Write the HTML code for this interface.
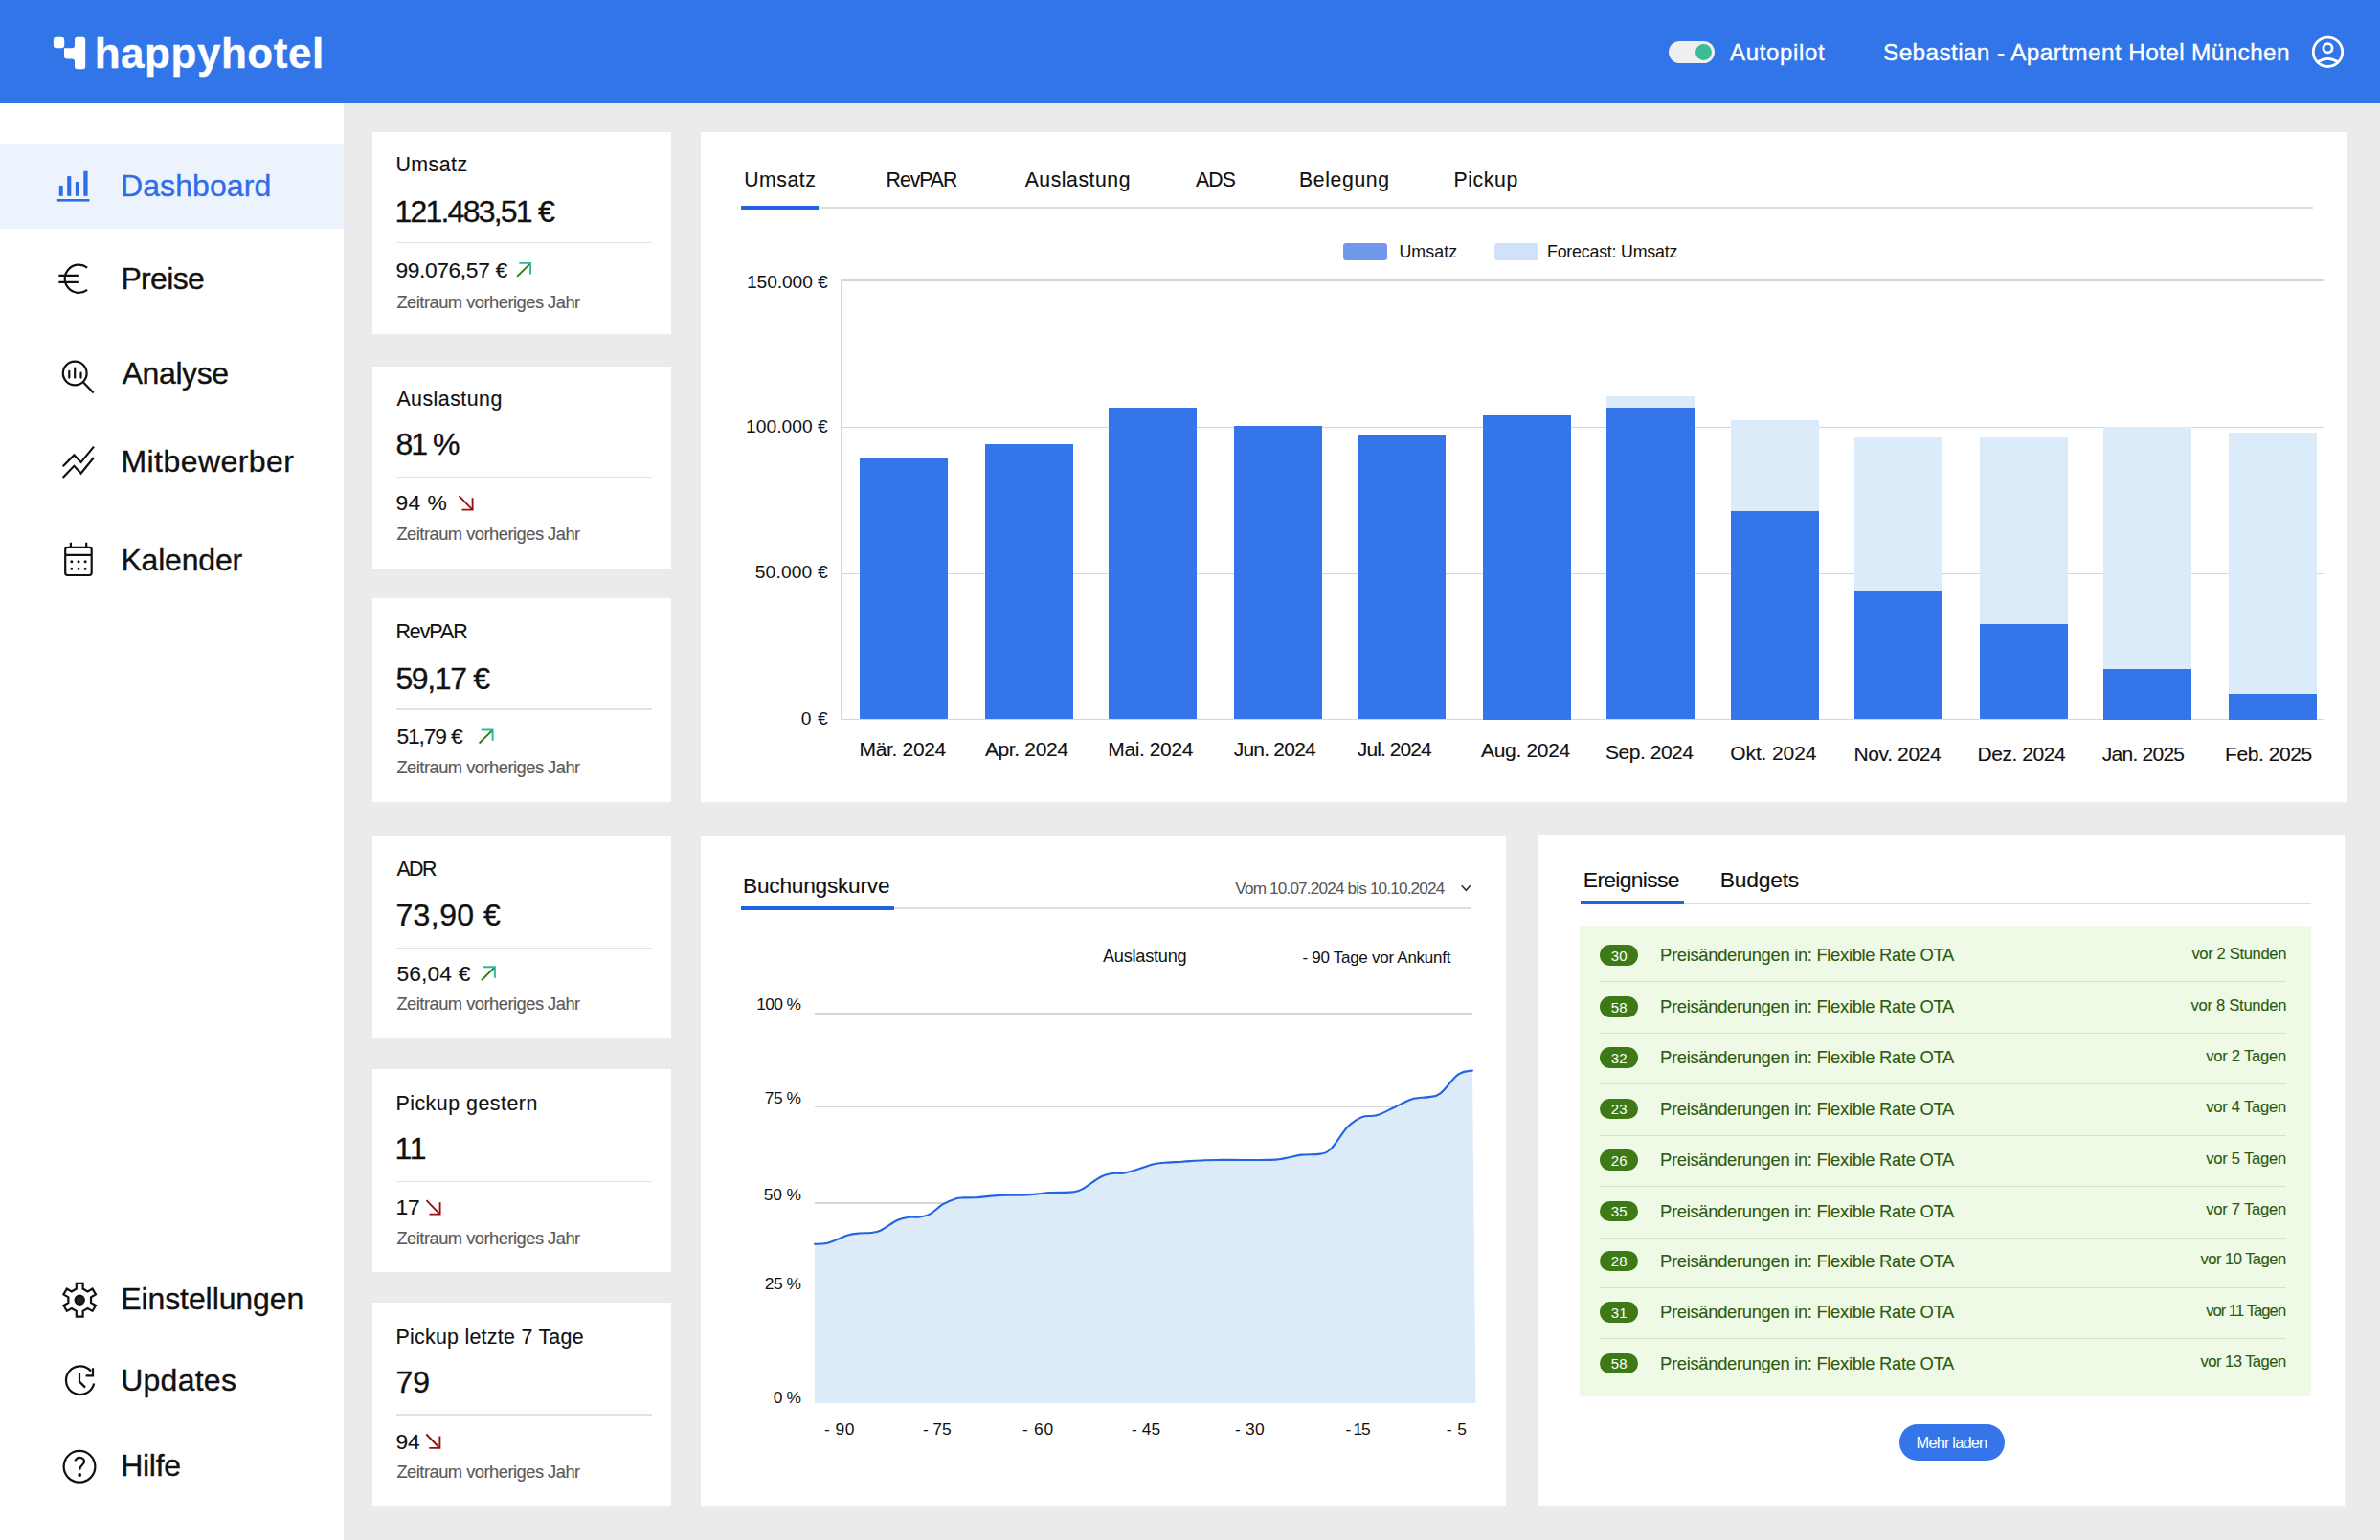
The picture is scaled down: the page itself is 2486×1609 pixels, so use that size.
<!DOCTYPE html>
<html><head><meta charset="utf-8"><title>happyhotel Dashboard</title>
<style>
html,body{margin:0;padding:0;}
body{width:2486px;height:1609px;position:relative;overflow:hidden;background:#ebebeb;font-family:'Liberation Sans', sans-serif;}
.t{position:absolute;white-space:pre;line-height:1;}
</style></head><body>
<div style="position:absolute;left:0.00px;top:0.00px;width:2486.00px;height:108.00px;background:#3275e9;"></div>
<svg style="position:absolute;left:0;top:0" width="120" height="107" viewBox="0 0 120 107">
<g fill="#fff">
<rect x="55.9" y="38.7" width="11.3" height="11.5" rx="3"/>
<path d="M81 38.7 H86.2 Q89.2 38.7 89.2 41.7 V69.2 Q89.2 72.2 86.2 72.2 H81 Q78 72.2 78 69.2 V64.2 Q78 61.5 75.3 61.5 H70 Q67 61.5 67 58.5 V50.2 H75.3 Q78 50.2 78 47.5 V41.7 Q78 38.7 81 38.7 Z"/>
</g></svg>
<div style="position:absolute;left:1742.60px;top:43.00px;width:48.50px;height:22.70px;background:#efefef;border-radius:12px;"></div>
<div style="position:absolute;left:1770.80px;top:45.60px;width:17.00px;height:17.00px;background:#3dbb93;border-radius:50%;"></div>
<svg style="position:absolute;left:2410px;top:33px" width="44" height="44" viewBox="2410 33 44 44">
<g fill="none" stroke="#fff" stroke-width="2.8">
<circle cx="2431.5" cy="54.3" r="15.2"/>
<circle cx="2431.5" cy="50.3" r="4.6"/>
<path d="M2420.5 65.2 Q2431.5 57.5 2442.5 65.2"/>
</g></svg>
<div style="position:absolute;left:0.00px;top:108.00px;width:359.00px;height:1501.00px;background:#fff;"></div>
<div style="position:absolute;left:0.00px;top:150.00px;width:359.00px;height:89.00px;background:#edf3fd;"></div>
<svg style="position:absolute;left:0;top:0" width="120" height="1609" viewBox="0 0 120 1609">
<g fill="#2f6de6">
<rect x="61.8" y="193.9" width="3.9" height="10.9"/>
<rect x="70.2" y="184.1" width="4.1" height="20.7"/>
<rect x="78.9" y="190" width="4.1" height="14.8"/>
<rect x="87.3" y="178.75" width="4.3" height="26.05"/>
<rect x="59.8" y="208.0" width="33.6" height="2.6"/>
</g>
<g fill="none" stroke="#111" stroke-width="2.2">
<path d="M91.1 279.6 A14.6 14.6 0 1 0 91.1 302.9"/>
<path d="M61.4 287.9 H81.8 M61.4 294.9 H81.8"/>
<circle cx="78.2" cy="390" r="12.4"/>
<path d="M87.1 399.4 L97.7 410.6"/>
<path d="M72.3 387.9 V394.6 M78.2 384.5 V394.6 M84.5 389.6 V394.6" stroke-linecap="round"/>
<path d="M65.7 487.3 L77.4 475.4 L84.6 482.9 L98 466.6"/>
<path d="M65.7 498.9 L77.4 486.8 L84.6 494.5 L98 478"/>
<rect x="68.2" y="571.8" width="27.5" height="29.2" rx="2.5"/>
<path d="M68.2 579.8 H95.7 M73.9 566.8 V571.4 M90.2 566.8 V571.4"/>
<path d="M79.80 1346.50 L79.80 1340.80 L86.60 1340.80 L86.60 1346.50 L91.63 1349.41 L96.57 1346.56 L99.97 1352.44 L95.03 1355.29 L95.03 1361.11 L99.97 1363.96 L96.57 1369.84 L91.63 1366.99 L86.60 1369.90 L86.60 1375.60 L79.80 1375.60 L79.80 1369.90 L74.77 1366.99 L69.83 1369.84 L66.43 1363.96 L71.37 1361.11 L71.37 1355.29 L66.43 1352.44 L69.83 1346.56 L74.77 1349.41 Z"/>
<circle cx="83.2" cy="1358.2" r="4.6" fill="#222"/>
<path d="M95 1432.5 A14.8 14.8 0 1 0 98.2 1445.5"/>
<path d="M97 1429.3 V1437.3 H89.6"/>
<path d="M83 1434.5 V1443.6 L89.1 1449.6"/>
<circle cx="83" cy="1532.3" r="16.4"/>
<path d="M78.4 1526.4 C79.5 1523.8 81.3 1522.8 83.3 1522.8 C86 1522.8 88 1524.6 88 1527.3 C88 1530.2 83.3 1531.2 83.1 1535.6"/>
</g>
<g fill="#111">
<circle cx="74.8" cy="586.8" r="1.5"/><circle cx="82" cy="586.8" r="1.5"/><circle cx="89.1" cy="586.8" r="1.5"/>
<circle cx="74.8" cy="594.3" r="1.5"/><circle cx="82" cy="594.3" r="1.5"/><circle cx="89.1" cy="594.3" r="1.5"/>
<circle cx="83.2" cy="1541" r="1.9"/>
</g>
</svg>
<div style="position:absolute;left:389.00px;top:138.00px;width:312.00px;height:211.20px;background:#fff;"></div>
<div style="position:absolute;left:414.00px;top:252.65px;width:267.40px;height:1.50px;background:#e3e3e3;"></div>
<div style="position:absolute;left:389.00px;top:382.50px;width:312.00px;height:211.10px;background:#fff;"></div>
<div style="position:absolute;left:414.00px;top:497.95px;width:267.40px;height:1.50px;background:#e3e3e3;"></div>
<div style="position:absolute;left:389.00px;top:625.00px;width:312.00px;height:212.60px;background:#fff;"></div>
<div style="position:absolute;left:414.00px;top:740.45px;width:267.40px;height:1.50px;background:#e3e3e3;"></div>
<div style="position:absolute;left:389.00px;top:872.60px;width:312.00px;height:212.30px;background:#fff;"></div>
<div style="position:absolute;left:414.00px;top:989.65px;width:267.40px;height:1.50px;background:#e3e3e3;"></div>
<div style="position:absolute;left:389.00px;top:1116.80px;width:312.00px;height:212.20px;background:#fff;"></div>
<div style="position:absolute;left:414.00px;top:1233.75px;width:267.40px;height:1.50px;background:#e3e3e3;"></div>
<div style="position:absolute;left:389.00px;top:1360.80px;width:312.00px;height:212.50px;background:#fff;"></div>
<div style="position:absolute;left:414.00px;top:1477.45px;width:267.40px;height:1.50px;background:#e3e3e3;"></div>
<svg style="position:absolute;left:0;top:0" width="720" height="1609" viewBox="0 0 720 1609"><g fill="none" stroke-width="1.9"><path d="M540.1 288.90000000000003 L553.6 275.6" stroke="#2f7a12"/><path d="M542.3000000000001 274.90000000000003 H554.1 V286.40000000000003" stroke="#2bb99a"/><path d="M479.5 518.1999999999999 L493.0 532.1999999999999" stroke="#9a0f0f"/><path d="M493.6 520.3 V532.6 H482.5" stroke="#9a0f0f"/><path d="M500.6 776.5 L514.1 763.2" stroke="#2f7a12"/><path d="M502.8 762.5 H514.6 V774.0" stroke="#2bb99a"/><path d="M502.9 1024.2 L516.4 1010.9000000000001" stroke="#2f7a12"/><path d="M505.09999999999997 1010.2 H516.9 V1021.7" stroke="#2bb99a"/><path d="M445.5 1254.1999999999998 L459.0 1268.1999999999998" stroke="#9a0f0f"/><path d="M459.6 1256.3 V1268.6 H448.5" stroke="#9a0f0f"/><path d="M445.3 1498.5 L458.8 1512.5" stroke="#9a0f0f"/><path d="M459.40000000000003 1500.6000000000001 V1512.9 H448.3" stroke="#9a0f0f"/></g></svg>
<div style="position:absolute;left:731.90px;top:137.60px;width:1720.30px;height:700.20px;background:#fff;"></div>
<div style="position:absolute;left:773.60px;top:216.30px;width:1642.40px;height:1.60px;background:#dedede;"></div>
<div style="position:absolute;left:773.60px;top:214.50px;width:81.40px;height:4.60px;background:#1f63e4;"></div>
<div style="position:absolute;left:1403.20px;top:253.80px;width:45.70px;height:17.80px;background:#7198ea;border-radius:3px;"></div>
<div style="position:absolute;left:1560.70px;top:253.80px;width:46.20px;height:17.80px;background:#d0e1fb;border-radius:3px;"></div>
<div style="position:absolute;left:879.00px;top:292.40px;width:1548.30px;height:1.40px;background:#d6d6d6;"></div>
<div style="position:absolute;left:879.00px;top:445.90px;width:1548.30px;height:1.40px;background:#d6d6d6;"></div>
<div style="position:absolute;left:879.00px;top:598.80px;width:1548.30px;height:1.40px;background:#d6d6d6;"></div>
<div style="position:absolute;left:879.00px;top:750.80px;width:1548.30px;height:1.40px;background:#d6d6d6;"></div>
<div style="position:absolute;left:878.10px;top:292.40px;width:1.40px;height:459.80px;background:#d6d6d6;"></div>
<div style="position:absolute;left:898.00px;top:478.40px;width:92.00px;height:273.10px;background:#3575ea;"></div>
<div style="position:absolute;left:1028.90px;top:463.70px;width:92.00px;height:287.80px;background:#3575ea;"></div>
<div style="position:absolute;left:1157.70px;top:425.90px;width:92.00px;height:325.60px;background:#3575ea;"></div>
<div style="position:absolute;left:1288.80px;top:445.40px;width:92.00px;height:306.10px;background:#3575ea;"></div>
<div style="position:absolute;left:1417.90px;top:455.20px;width:92.00px;height:296.30px;background:#3575ea;"></div>
<div style="position:absolute;left:1548.70px;top:434.00px;width:92.00px;height:317.50px;background:#3575ea;"></div>
<div style="position:absolute;left:1677.70px;top:413.60px;width:92.00px;height:337.90px;background:#dcebf9;"></div>
<div style="position:absolute;left:1677.70px;top:425.90px;width:92.00px;height:325.60px;background:#3575ea;"></div>
<div style="position:absolute;left:1808.00px;top:438.50px;width:92.00px;height:313.00px;background:#dcebf9;"></div>
<div style="position:absolute;left:1808.00px;top:534.00px;width:92.00px;height:217.50px;background:#3575ea;"></div>
<div style="position:absolute;left:1937.20px;top:456.70px;width:92.00px;height:294.80px;background:#dcebf9;"></div>
<div style="position:absolute;left:1937.20px;top:616.90px;width:92.00px;height:134.60px;background:#3575ea;"></div>
<div style="position:absolute;left:2068.00px;top:456.70px;width:92.00px;height:294.80px;background:#dcebf9;"></div>
<div style="position:absolute;left:2068.00px;top:651.80px;width:92.00px;height:99.70px;background:#3575ea;"></div>
<div style="position:absolute;left:2197.20px;top:446.20px;width:92.00px;height:305.30px;background:#dcebf9;"></div>
<div style="position:absolute;left:2197.20px;top:699.00px;width:92.00px;height:52.50px;background:#3575ea;"></div>
<div style="position:absolute;left:2327.90px;top:451.50px;width:92.00px;height:300.00px;background:#dcebf9;"></div>
<div style="position:absolute;left:2327.90px;top:724.50px;width:92.00px;height:27.00px;background:#3575ea;"></div>
<div style="position:absolute;left:731.90px;top:872.60px;width:841.10px;height:700.70px;background:#fff;"></div>
<div style="position:absolute;left:773.50px;top:948.20px;width:763.50px;height:1.60px;background:#dedede;"></div>
<div style="position:absolute;left:773.50px;top:947.30px;width:160.50px;height:4.00px;background:#1f63e4;"></div>
<svg style="position:absolute;left:1520px;top:918px" width="24" height="20" viewBox="1520 918 24 20"><path d="M1526.8 925.3 L1531.3 930.2 L1535.8 925.3" fill="none" stroke="#333" stroke-width="1.7"/></svg>
<div style="position:absolute;left:851.20px;top:1058.00px;width:686.70px;height:1.60px;background:#d6d6d6;"></div>
<div style="position:absolute;left:851.20px;top:1155.50px;width:686.70px;height:1.60px;background:#d6d6d6;"></div>
<div style="position:absolute;left:851.20px;top:1256.40px;width:686.70px;height:1.60px;background:#d6d6d6;"></div>
<svg style="position:absolute;left:0;top:0" width="2486" height="1609" viewBox="0 0 2486 1609"><path d="M851.00 1299.80 C853.00 1299.67 859.50 1299.63 863.00 1299.00 C866.50 1298.37 868.25 1297.42 872.00 1296.00 C875.75 1294.58 881.25 1291.75 885.50 1290.50 C889.75 1289.25 893.50 1288.92 897.50 1288.50 C901.50 1288.08 905.75 1288.50 909.50 1288.00 C913.25 1287.50 915.42 1287.67 920.00 1285.50 C924.58 1283.33 932.17 1277.28 937.00 1275.00 C941.83 1272.72 945.00 1272.40 949.00 1271.80 C953.00 1271.20 957.25 1271.97 961.00 1271.40 C964.75 1270.83 967.50 1270.60 971.50 1268.40 C975.50 1266.20 980.42 1260.90 985.00 1258.20 C989.58 1255.50 995.42 1253.33 999.00 1252.20 C1002.58 1251.07 1002.75 1251.58 1006.50 1251.40 C1010.25 1251.22 1015.25 1251.52 1021.50 1251.10 C1027.75 1250.68 1036.42 1249.30 1044.00 1248.90 C1051.58 1248.50 1060.67 1248.92 1067.00 1248.70 C1073.33 1248.48 1077.00 1248.03 1082.00 1247.60 C1087.00 1247.17 1090.67 1246.47 1097.00 1246.10 C1103.33 1245.73 1114.42 1246.02 1120.00 1245.40 C1125.58 1244.78 1125.50 1245.05 1130.50 1242.40 C1135.50 1239.75 1144.75 1232.23 1150.00 1229.50 C1155.25 1226.77 1158.17 1226.63 1162.00 1226.00 C1165.83 1225.37 1169.17 1226.25 1173.00 1225.70 C1176.83 1225.15 1179.67 1224.28 1185.00 1222.70 C1190.33 1221.12 1199.67 1217.53 1205.00 1216.20 C1210.33 1214.87 1212.00 1215.12 1217.00 1214.70 C1222.00 1214.28 1228.17 1214.12 1235.00 1213.70 C1241.83 1213.28 1250.33 1212.50 1258.00 1212.20 C1265.67 1211.90 1269.67 1211.95 1281.00 1211.90 C1292.33 1211.85 1316.00 1212.15 1326.00 1211.90 C1336.00 1211.65 1335.42 1211.28 1341.00 1210.40 C1346.58 1209.52 1353.17 1207.40 1359.50 1206.60 C1365.83 1205.80 1373.92 1206.60 1379.00 1205.60 C1384.08 1204.60 1385.17 1205.35 1390.00 1200.60 C1394.83 1195.85 1402.50 1182.72 1408.00 1177.10 C1413.50 1171.48 1418.00 1168.87 1423.00 1166.90 C1428.00 1164.93 1432.50 1166.92 1438.00 1165.30 C1443.50 1163.68 1449.92 1160.02 1456.00 1157.20 C1462.08 1154.38 1468.42 1150.25 1474.50 1148.40 C1480.58 1146.55 1487.50 1147.10 1492.50 1146.10 C1497.50 1145.10 1499.42 1146.30 1504.50 1142.40 C1509.58 1138.50 1517.42 1126.68 1523.00 1122.70 C1528.58 1118.72 1535.50 1119.20 1538.00 1118.50 L1541.5 1466 L851 1466 Z" fill="#ddebf9"/><path d="M851.00 1299.80 C853.00 1299.67 859.50 1299.63 863.00 1299.00 C866.50 1298.37 868.25 1297.42 872.00 1296.00 C875.75 1294.58 881.25 1291.75 885.50 1290.50 C889.75 1289.25 893.50 1288.92 897.50 1288.50 C901.50 1288.08 905.75 1288.50 909.50 1288.00 C913.25 1287.50 915.42 1287.67 920.00 1285.50 C924.58 1283.33 932.17 1277.28 937.00 1275.00 C941.83 1272.72 945.00 1272.40 949.00 1271.80 C953.00 1271.20 957.25 1271.97 961.00 1271.40 C964.75 1270.83 967.50 1270.60 971.50 1268.40 C975.50 1266.20 980.42 1260.90 985.00 1258.20 C989.58 1255.50 995.42 1253.33 999.00 1252.20 C1002.58 1251.07 1002.75 1251.58 1006.50 1251.40 C1010.25 1251.22 1015.25 1251.52 1021.50 1251.10 C1027.75 1250.68 1036.42 1249.30 1044.00 1248.90 C1051.58 1248.50 1060.67 1248.92 1067.00 1248.70 C1073.33 1248.48 1077.00 1248.03 1082.00 1247.60 C1087.00 1247.17 1090.67 1246.47 1097.00 1246.10 C1103.33 1245.73 1114.42 1246.02 1120.00 1245.40 C1125.58 1244.78 1125.50 1245.05 1130.50 1242.40 C1135.50 1239.75 1144.75 1232.23 1150.00 1229.50 C1155.25 1226.77 1158.17 1226.63 1162.00 1226.00 C1165.83 1225.37 1169.17 1226.25 1173.00 1225.70 C1176.83 1225.15 1179.67 1224.28 1185.00 1222.70 C1190.33 1221.12 1199.67 1217.53 1205.00 1216.20 C1210.33 1214.87 1212.00 1215.12 1217.00 1214.70 C1222.00 1214.28 1228.17 1214.12 1235.00 1213.70 C1241.83 1213.28 1250.33 1212.50 1258.00 1212.20 C1265.67 1211.90 1269.67 1211.95 1281.00 1211.90 C1292.33 1211.85 1316.00 1212.15 1326.00 1211.90 C1336.00 1211.65 1335.42 1211.28 1341.00 1210.40 C1346.58 1209.52 1353.17 1207.40 1359.50 1206.60 C1365.83 1205.80 1373.92 1206.60 1379.00 1205.60 C1384.08 1204.60 1385.17 1205.35 1390.00 1200.60 C1394.83 1195.85 1402.50 1182.72 1408.00 1177.10 C1413.50 1171.48 1418.00 1168.87 1423.00 1166.90 C1428.00 1164.93 1432.50 1166.92 1438.00 1165.30 C1443.50 1163.68 1449.92 1160.02 1456.00 1157.20 C1462.08 1154.38 1468.42 1150.25 1474.50 1148.40 C1480.58 1146.55 1487.50 1147.10 1492.50 1146.10 C1497.50 1145.10 1499.42 1146.30 1504.50 1142.40 C1509.58 1138.50 1517.42 1126.68 1523.00 1122.70 C1528.58 1118.72 1535.50 1119.20 1538.00 1118.50" fill="none" stroke="#2265e3" stroke-width="2.1" stroke-linecap="round"/></svg>
<div style="position:absolute;left:1606.20px;top:872.40px;width:843.00px;height:700.60px;background:#fff;"></div>
<div style="position:absolute;left:1651.40px;top:942.80px;width:762.40px;height:1.60px;background:#dedede;"></div>
<div style="position:absolute;left:1651.40px;top:941.00px;width:107.30px;height:4.00px;background:#1f63e4;"></div>
<div style="position:absolute;left:1649.50px;top:968.40px;width:764.30px;height:490.50px;background:#eefae5;"></div>
<div style="position:absolute;left:1671.00px;top:987.10px;width:40.00px;height:21.80px;background:#3d7a17;border-radius:11px;"></div>
<div style="position:absolute;left:1671.00px;top:1025.00px;width:717.20px;height:1.00px;background:#d3e6c4;"></div>
<div style="position:absolute;left:1671.00px;top:1041.10px;width:40.00px;height:21.80px;background:#3d7a17;border-radius:11px;"></div>
<div style="position:absolute;left:1671.00px;top:1079.00px;width:717.20px;height:1.00px;background:#d3e6c4;"></div>
<div style="position:absolute;left:1671.00px;top:1094.10px;width:40.00px;height:21.80px;background:#3d7a17;border-radius:11px;"></div>
<div style="position:absolute;left:1671.00px;top:1132.00px;width:717.20px;height:1.00px;background:#d3e6c4;"></div>
<div style="position:absolute;left:1671.00px;top:1147.70px;width:40.00px;height:21.80px;background:#3d7a17;border-radius:11px;"></div>
<div style="position:absolute;left:1671.00px;top:1186.00px;width:717.20px;height:1.00px;background:#d3e6c4;"></div>
<div style="position:absolute;left:1671.00px;top:1201.30px;width:40.00px;height:21.80px;background:#3d7a17;border-radius:11px;"></div>
<div style="position:absolute;left:1671.00px;top:1239.00px;width:717.20px;height:1.00px;background:#d3e6c4;"></div>
<div style="position:absolute;left:1671.00px;top:1254.60px;width:40.00px;height:21.80px;background:#3d7a17;border-radius:11px;"></div>
<div style="position:absolute;left:1671.00px;top:1293.00px;width:717.20px;height:1.00px;background:#d3e6c4;"></div>
<div style="position:absolute;left:1671.00px;top:1306.70px;width:40.00px;height:21.80px;background:#3d7a17;border-radius:11px;"></div>
<div style="position:absolute;left:1671.00px;top:1345.00px;width:717.20px;height:1.00px;background:#d3e6c4;"></div>
<div style="position:absolute;left:1671.00px;top:1360.30px;width:40.00px;height:21.80px;background:#3d7a17;border-radius:11px;"></div>
<div style="position:absolute;left:1671.00px;top:1398.00px;width:717.20px;height:1.00px;background:#d3e6c4;"></div>
<div style="position:absolute;left:1671.00px;top:1413.60px;width:40.00px;height:21.80px;background:#3d7a17;border-radius:11px;"></div>
<div style="position:absolute;left:1984.20px;top:1487.50px;width:110.30px;height:38.40px;background:#3575ea;border-radius:19.2px;"></div>
<svg style="position:absolute;left:0;top:0" width="2486" height="1609" viewBox="0 0 2486 1609" font-family="'Liberation Sans', sans-serif" xml:space="preserve">
<text x="98.70" y="71.00" fill="#fff" stroke="#fff" stroke-width="0.35" style="font-size:44px;font-weight:700;letter-spacing:0.539px;">happyhotel</text>
<text x="1807.10" y="62.80" fill="#fff" stroke="#fff" stroke-width="0.35" style="font-size:24px;letter-spacing:0.634px;">Autopilot</text>
<text x="1967.00" y="63.10" fill="#fff" stroke="#fff" stroke-width="0.35" style="font-size:24.4px;letter-spacing:0.366px;">Sebastian - Apartment Hotel München</text>
<text x="126.00" y="205.00" fill="#2f6de6" stroke="#2f6de6" stroke-width="0.35" style="font-size:32px;letter-spacing:0.094px;">Dashboard</text>
<text x="126.40" y="301.70" fill="#111111" stroke="#111111" stroke-width="0.35" style="font-size:32px;letter-spacing:-0.661px;">Preise</text>
<text x="127.70" y="401.00" fill="#111111" stroke="#111111" stroke-width="0.35" style="font-size:32px;letter-spacing:-0.408px;">Analyse</text>
<text x="126.40" y="493.00" fill="#111111" stroke="#111111" stroke-width="0.35" style="font-size:32px;letter-spacing:0.449px;">Mitbewerber</text>
<text x="126.40" y="596.00" fill="#111111" stroke="#111111" stroke-width="0.35" style="font-size:32px;letter-spacing:-0.191px;">Kalender</text>
<text x="126.20" y="1368.40" fill="#111111" stroke="#111111" stroke-width="0.35" style="font-size:32px;letter-spacing:-0.087px;">Einstellungen</text>
<text x="126.20" y="1452.70" fill="#111111" stroke="#111111" stroke-width="0.35" style="font-size:32px;letter-spacing:0.252px;">Updates</text>
<text x="126.20" y="1541.50" fill="#111111" stroke="#111111" stroke-width="0.35" style="font-size:32px;letter-spacing:-0.280px;">Hilfe</text>
<text x="413.40" y="179.30" fill="#111111" stroke="#111111" stroke-width="0.12" style="font-size:21.4px;letter-spacing:0.440px;">Umsatz</text>
<text x="412.40" y="232.00" fill="#111111" stroke="#111111" stroke-width="0.35" style="font-size:32px;letter-spacing:-1.768px;">121.483,51 €</text>
<text x="413.40" y="289.60" fill="#111111" stroke="#111111" stroke-width="0.12" style="font-size:22.8px;letter-spacing:-0.375px;">99.076,57 €</text>
<text x="414.40" y="321.60" fill="#5a5a5a" stroke="#5a5a5a" stroke-width="0.15" style="font-size:18.3px;letter-spacing:-0.496px;">Zeitraum vorheriges Jahr</text>
<text x="414.40" y="424.10" fill="#111111" stroke="#111111" stroke-width="0.12" style="font-size:21.4px;letter-spacing:0.451px;">Auslastung</text>
<text x="413.40" y="475.00" fill="#111111" stroke="#111111" stroke-width="0.35" style="font-size:32px;letter-spacing:-1.961px;">81 %</text>
<text x="413.40" y="533.40" fill="#111111" stroke="#111111" stroke-width="0.12" style="font-size:22.8px;letter-spacing:0.436px;">94 %</text>
<text x="414.40" y="564.00" fill="#5a5a5a" stroke="#5a5a5a" stroke-width="0.15" style="font-size:18.3px;letter-spacing:-0.496px;">Zeitraum vorheriges Jahr</text>
<text x="413.40" y="666.60" fill="#111111" stroke="#111111" stroke-width="0.12" style="font-size:21.4px;letter-spacing:-1.037px;">RevPAR</text>
<text x="413.40" y="719.80" fill="#111111" stroke="#111111" stroke-width="0.35" style="font-size:32px;letter-spacing:-1.361px;">59,17 €</text>
<text x="414.40" y="777.20" fill="#111111" stroke="#111111" stroke-width="0.12" style="font-size:22.8px;letter-spacing:-1.130px;">51,79 €</text>
<text x="414.40" y="808.00" fill="#5a5a5a" stroke="#5a5a5a" stroke-width="0.15" style="font-size:18.3px;letter-spacing:-0.496px;">Zeitraum vorheriges Jahr</text>
<text x="414.40" y="915.40" fill="#111111" stroke="#111111" stroke-width="0.12" style="font-size:21.4px;letter-spacing:-1.558px;">ADR</text>
<text x="413.40" y="967.00" fill="#111111" stroke="#111111" stroke-width="0.35" style="font-size:32px;letter-spacing:0.422px;">73,90 €</text>
<text x="414.40" y="1024.90" fill="#111111" stroke="#111111" stroke-width="0.12" style="font-size:22.8px;letter-spacing:0.153px;">56,04 €</text>
<text x="414.40" y="1055.10" fill="#5a5a5a" stroke="#5a5a5a" stroke-width="0.15" style="font-size:18.3px;letter-spacing:-0.496px;">Zeitraum vorheriges Jahr</text>
<text x="413.40" y="1159.80" fill="#111111" stroke="#111111" stroke-width="0.12" style="font-size:21.4px;letter-spacing:0.493px;">Pickup gestern</text>
<text x="412.40" y="1211.00" fill="#111111" stroke="#111111" stroke-width="0.35" style="font-size:32px;">11</text>
<text x="413.40" y="1269.40" fill="#111111" stroke="#111111" stroke-width="0.12" style="font-size:22.8px;">17</text>
<text x="414.40" y="1300.20" fill="#5a5a5a" stroke="#5a5a5a" stroke-width="0.15" style="font-size:18.3px;letter-spacing:-0.496px;">Zeitraum vorheriges Jahr</text>
<text x="413.40" y="1404.40" fill="#111111" stroke="#111111" stroke-width="0.12" style="font-size:21.4px;letter-spacing:0.271px;">Pickup letzte 7 Tage</text>
<text x="413.40" y="1454.50" fill="#111111" stroke="#111111" stroke-width="0.35" style="font-size:32px;">79</text>
<text x="413.40" y="1513.70" fill="#111111" stroke="#111111" stroke-width="0.12" style="font-size:22.8px;">94</text>
<text x="414.40" y="1543.80" fill="#5a5a5a" stroke="#5a5a5a" stroke-width="0.15" style="font-size:18.3px;letter-spacing:-0.496px;">Zeitraum vorheriges Jahr</text>
<text x="777.20" y="194.80" fill="#111111" stroke="#111111" stroke-width="0.12" style="font-size:21.2px;letter-spacing:0.557px;">Umsatz</text>
<text x="925.60" y="194.80" fill="#111111" stroke="#111111" stroke-width="0.12" style="font-size:21.2px;letter-spacing:-0.994px;">RevPAR</text>
<text x="1070.70" y="194.80" fill="#111111" stroke="#111111" stroke-width="0.12" style="font-size:21.2px;letter-spacing:0.550px;">Auslastung</text>
<text x="1249.00" y="194.80" fill="#111111" stroke="#111111" stroke-width="0.12" style="font-size:21.2px;letter-spacing:-0.866px;">ADS</text>
<text x="1357.00" y="194.80" fill="#111111" stroke="#111111" stroke-width="0.12" style="font-size:21.2px;letter-spacing:0.649px;">Belegung</text>
<text x="1518.40" y="194.80" fill="#111111" stroke="#111111" stroke-width="0.12" style="font-size:21.2px;letter-spacing:0.638px;">Pickup</text>
<text x="1461.40" y="269.10" fill="#111111" style="font-size:17.8px;letter-spacing:0.085px;">Umsatz</text>
<text x="1616.00" y="269.10" fill="#111111" style="font-size:17.8px;letter-spacing:-0.202px;">Forecast: Umsatz</text>
<text x="780.00" y="300.60" fill="#111111" style="font-size:19.2px;letter-spacing:-0.086px;">150.000 €</text>
<text x="779.00" y="451.50" fill="#111111" style="font-size:19.2px;letter-spacing:0.039px;">100.000 €</text>
<text x="788.70" y="604.00" fill="#111111" style="font-size:19.2px;letter-spacing:0.183px;">50.000 €</text>
<text x="836.70" y="756.60" fill="#111111" style="font-size:19.2px;letter-spacing:0.649px;">0 €</text>
<text x="897.50" y="790.40" fill="#111111" stroke="#111111" stroke-width="0.12" style="font-size:21px;letter-spacing:-0.327px;">Mär. 2024</text>
<text x="1028.90" y="790.40" fill="#111111" stroke="#111111" stroke-width="0.12" style="font-size:21px;letter-spacing:-0.353px;">Apr. 2024</text>
<text x="1157.30" y="790.40" fill="#111111" stroke="#111111" stroke-width="0.12" style="font-size:21px;letter-spacing:-0.393px;">Mai. 2024</text>
<text x="1288.70" y="790.40" fill="#111111" stroke="#111111" stroke-width="0.12" style="font-size:21px;letter-spacing:-0.771px;">Jun. 2024</text>
<text x="1417.80" y="790.40" fill="#111111" stroke="#111111" stroke-width="0.12" style="font-size:21px;letter-spacing:-0.906px;">Jul. 2024</text>
<text x="1547.00" y="791.30" fill="#111111" stroke="#111111" stroke-width="0.12" style="font-size:21px;letter-spacing:-0.309px;">Aug. 2024</text>
<text x="1677.00" y="792.50" fill="#111111" stroke="#111111" stroke-width="0.12" style="font-size:21px;letter-spacing:-0.471px;">Sep. 2024</text>
<text x="1807.30" y="794.00" fill="#111111" stroke="#111111" stroke-width="0.12" style="font-size:21px;letter-spacing:-0.122px;">Okt. 2024</text>
<text x="1936.50" y="795.30" fill="#111111" stroke="#111111" stroke-width="0.12" style="font-size:21px;letter-spacing:-0.374px;">Nov. 2024</text>
<text x="2065.60" y="795.30" fill="#111111" stroke="#111111" stroke-width="0.12" style="font-size:21px;letter-spacing:-0.456px;">Dez. 2024</text>
<text x="2195.80" y="795.30" fill="#111111" stroke="#111111" stroke-width="0.12" style="font-size:21px;letter-spacing:-0.758px;">Jan. 2025</text>
<text x="2324.00" y="795.30" fill="#111111" stroke="#111111" stroke-width="0.12" style="font-size:21px;letter-spacing:-0.437px;">Feb. 2025</text>
<text x="776.10" y="933.40" fill="#111111" stroke="#111111" stroke-width="0.12" style="font-size:22.7px;letter-spacing:-0.247px;">Buchungskurve</text>
<text x="1290.30" y="934.30" fill="#555" style="font-size:17.2px;letter-spacing:-0.849px;">Vom 10.07.2024 bis 10.10.2024</text>
<text x="1151.90" y="1005.30" fill="#111111" style="font-size:18.2px;letter-spacing:-0.241px;">Auslastung</text>
<text x="1360.40" y="1006.20" fill="#111111" style="font-size:17px;letter-spacing:-0.268px;">- 90 Tage vor Ankunft</text>
<text x="790.20" y="1055.20" fill="#111111" style="font-size:17.4px;letter-spacing:-0.662px;">100 %</text>
<text x="798.80" y="1153.40" fill="#111111" style="font-size:17.4px;letter-spacing:-0.525px;">75 %</text>
<text x="797.70" y="1254.20" fill="#111111" style="font-size:17.4px;letter-spacing:-0.158px;">50 %</text>
<text x="798.80" y="1347.40" fill="#111111" style="font-size:17.4px;letter-spacing:-0.525px;">25 %</text>
<text x="807.80" y="1466.00" fill="#111111" style="font-size:17.4px;letter-spacing:-0.452px;">0 %</text>
<text x="861.00" y="1499.20" fill="#111111" style="font-size:17.4px;letter-spacing:0.468px;">- 90</text>
<text x="964.00" y="1499.20" fill="#111111" style="font-size:17.4px;letter-spacing:-0.132px;">- 75</text>
<text x="1068.00" y="1499.20" fill="#111111" style="font-size:17.4px;letter-spacing:0.735px;">- 60</text>
<text x="1181.90" y="1499.20" fill="#111111" style="font-size:17.4px;letter-spacing:0.102px;">- 45</text>
<text x="1290.00" y="1499.20" fill="#111111" style="font-size:17.4px;letter-spacing:0.235px;">- 30</text>
<text x="1405.60" y="1499.20" fill="#111111" style="font-size:17.4px;letter-spacing:-1.332px;">- 15</text>
<text x="1510.70" y="1499.20" fill="#111111" style="font-size:17.4px;letter-spacing:0.489px;">- 5</text>
<text x="1653.80" y="926.60" fill="#111111" stroke="#111111" stroke-width="0.12" style="font-size:22.9px;letter-spacing:-0.683px;">Ereignisse</text>
<text x="1796.80" y="926.60" fill="#111111" stroke="#111111" stroke-width="0.12" style="font-size:22.9px;letter-spacing:-0.258px;">Budgets</text>
<text x="1682.83" y="1003.60" fill="#fff" style="font-size:15px;">30</text>
<text x="1734.00" y="1004.20" fill="#2d5a12" stroke="#2d5a12" stroke-width="0.12" style="font-size:18.4px;letter-spacing:-0.315px;">Preisänderungen in: Flexible Rate OTA</text>
<text x="2289.40" y="1001.70" fill="#2d5a12" stroke="#2d5a12" stroke-width="0.12" style="font-size:16.6px;letter-spacing:-0.358px;">vor 2 Stunden</text>
<text x="1682.83" y="1057.60" fill="#fff" style="font-size:15px;">58</text>
<text x="1734.00" y="1058.20" fill="#2d5a12" stroke="#2d5a12" stroke-width="0.12" style="font-size:18.4px;letter-spacing:-0.315px;">Preisänderungen in: Flexible Rate OTA</text>
<text x="2288.50" y="1055.70" fill="#2d5a12" stroke="#2d5a12" stroke-width="0.12" style="font-size:16.6px;letter-spacing:-0.283px;">vor 8 Stunden</text>
<text x="1682.83" y="1110.60" fill="#fff" style="font-size:15px;">32</text>
<text x="1734.00" y="1111.20" fill="#2d5a12" stroke="#2d5a12" stroke-width="0.12" style="font-size:18.4px;letter-spacing:-0.315px;">Preisänderungen in: Flexible Rate OTA</text>
<text x="2304.20" y="1108.70" fill="#2d5a12" stroke="#2d5a12" stroke-width="0.12" style="font-size:16.6px;letter-spacing:-0.248px;">vor 2 Tagen</text>
<text x="1682.83" y="1164.20" fill="#fff" style="font-size:15px;">23</text>
<text x="1734.00" y="1164.80" fill="#2d5a12" stroke="#2d5a12" stroke-width="0.12" style="font-size:18.4px;letter-spacing:-0.315px;">Preisänderungen in: Flexible Rate OTA</text>
<text x="2304.20" y="1162.30" fill="#2d5a12" stroke="#2d5a12" stroke-width="0.12" style="font-size:16.6px;letter-spacing:-0.248px;">vor 4 Tagen</text>
<text x="1682.83" y="1217.80" fill="#fff" style="font-size:15px;">26</text>
<text x="1734.00" y="1218.40" fill="#2d5a12" stroke="#2d5a12" stroke-width="0.12" style="font-size:18.4px;letter-spacing:-0.315px;">Preisänderungen in: Flexible Rate OTA</text>
<text x="2304.20" y="1215.90" fill="#2d5a12" stroke="#2d5a12" stroke-width="0.12" style="font-size:16.6px;letter-spacing:-0.248px;">vor 5 Tagen</text>
<text x="1682.83" y="1271.10" fill="#fff" style="font-size:15px;">35</text>
<text x="1734.00" y="1271.70" fill="#2d5a12" stroke="#2d5a12" stroke-width="0.12" style="font-size:18.4px;letter-spacing:-0.315px;">Preisänderungen in: Flexible Rate OTA</text>
<text x="2304.20" y="1269.20" fill="#2d5a12" stroke="#2d5a12" stroke-width="0.12" style="font-size:16.6px;letter-spacing:-0.248px;">vor 7 Tagen</text>
<text x="1682.83" y="1323.20" fill="#fff" style="font-size:15px;">28</text>
<text x="1734.00" y="1323.80" fill="#2d5a12" stroke="#2d5a12" stroke-width="0.12" style="font-size:18.4px;letter-spacing:-0.315px;">Preisänderungen in: Flexible Rate OTA</text>
<text x="2298.60" y="1321.30" fill="#2d5a12" stroke="#2d5a12" stroke-width="0.12" style="font-size:16.6px;letter-spacing:-0.556px;">vor 10 Tagen</text>
<text x="1682.83" y="1376.80" fill="#fff" style="font-size:15px;">31</text>
<text x="1734.00" y="1377.40" fill="#2d5a12" stroke="#2d5a12" stroke-width="0.12" style="font-size:18.4px;letter-spacing:-0.315px;">Preisänderungen in: Flexible Rate OTA</text>
<text x="2304.20" y="1374.90" fill="#2d5a12" stroke="#2d5a12" stroke-width="0.12" style="font-size:16.6px;letter-spacing:-0.953px;">vor 11 Tagen</text>
<text x="1682.83" y="1430.10" fill="#fff" style="font-size:15px;">58</text>
<text x="1734.00" y="1430.70" fill="#2d5a12" stroke="#2d5a12" stroke-width="0.12" style="font-size:18.4px;letter-spacing:-0.315px;">Preisänderungen in: Flexible Rate OTA</text>
<text x="2298.60" y="1428.20" fill="#2d5a12" stroke="#2d5a12" stroke-width="0.12" style="font-size:16.6px;letter-spacing:-0.556px;">vor 13 Tagen</text>
<text x="2001.60" y="1512.70" fill="#fff" style="font-size:16.4px;letter-spacing:-0.832px;">Mehr laden</text>
</svg>
</body></html>
